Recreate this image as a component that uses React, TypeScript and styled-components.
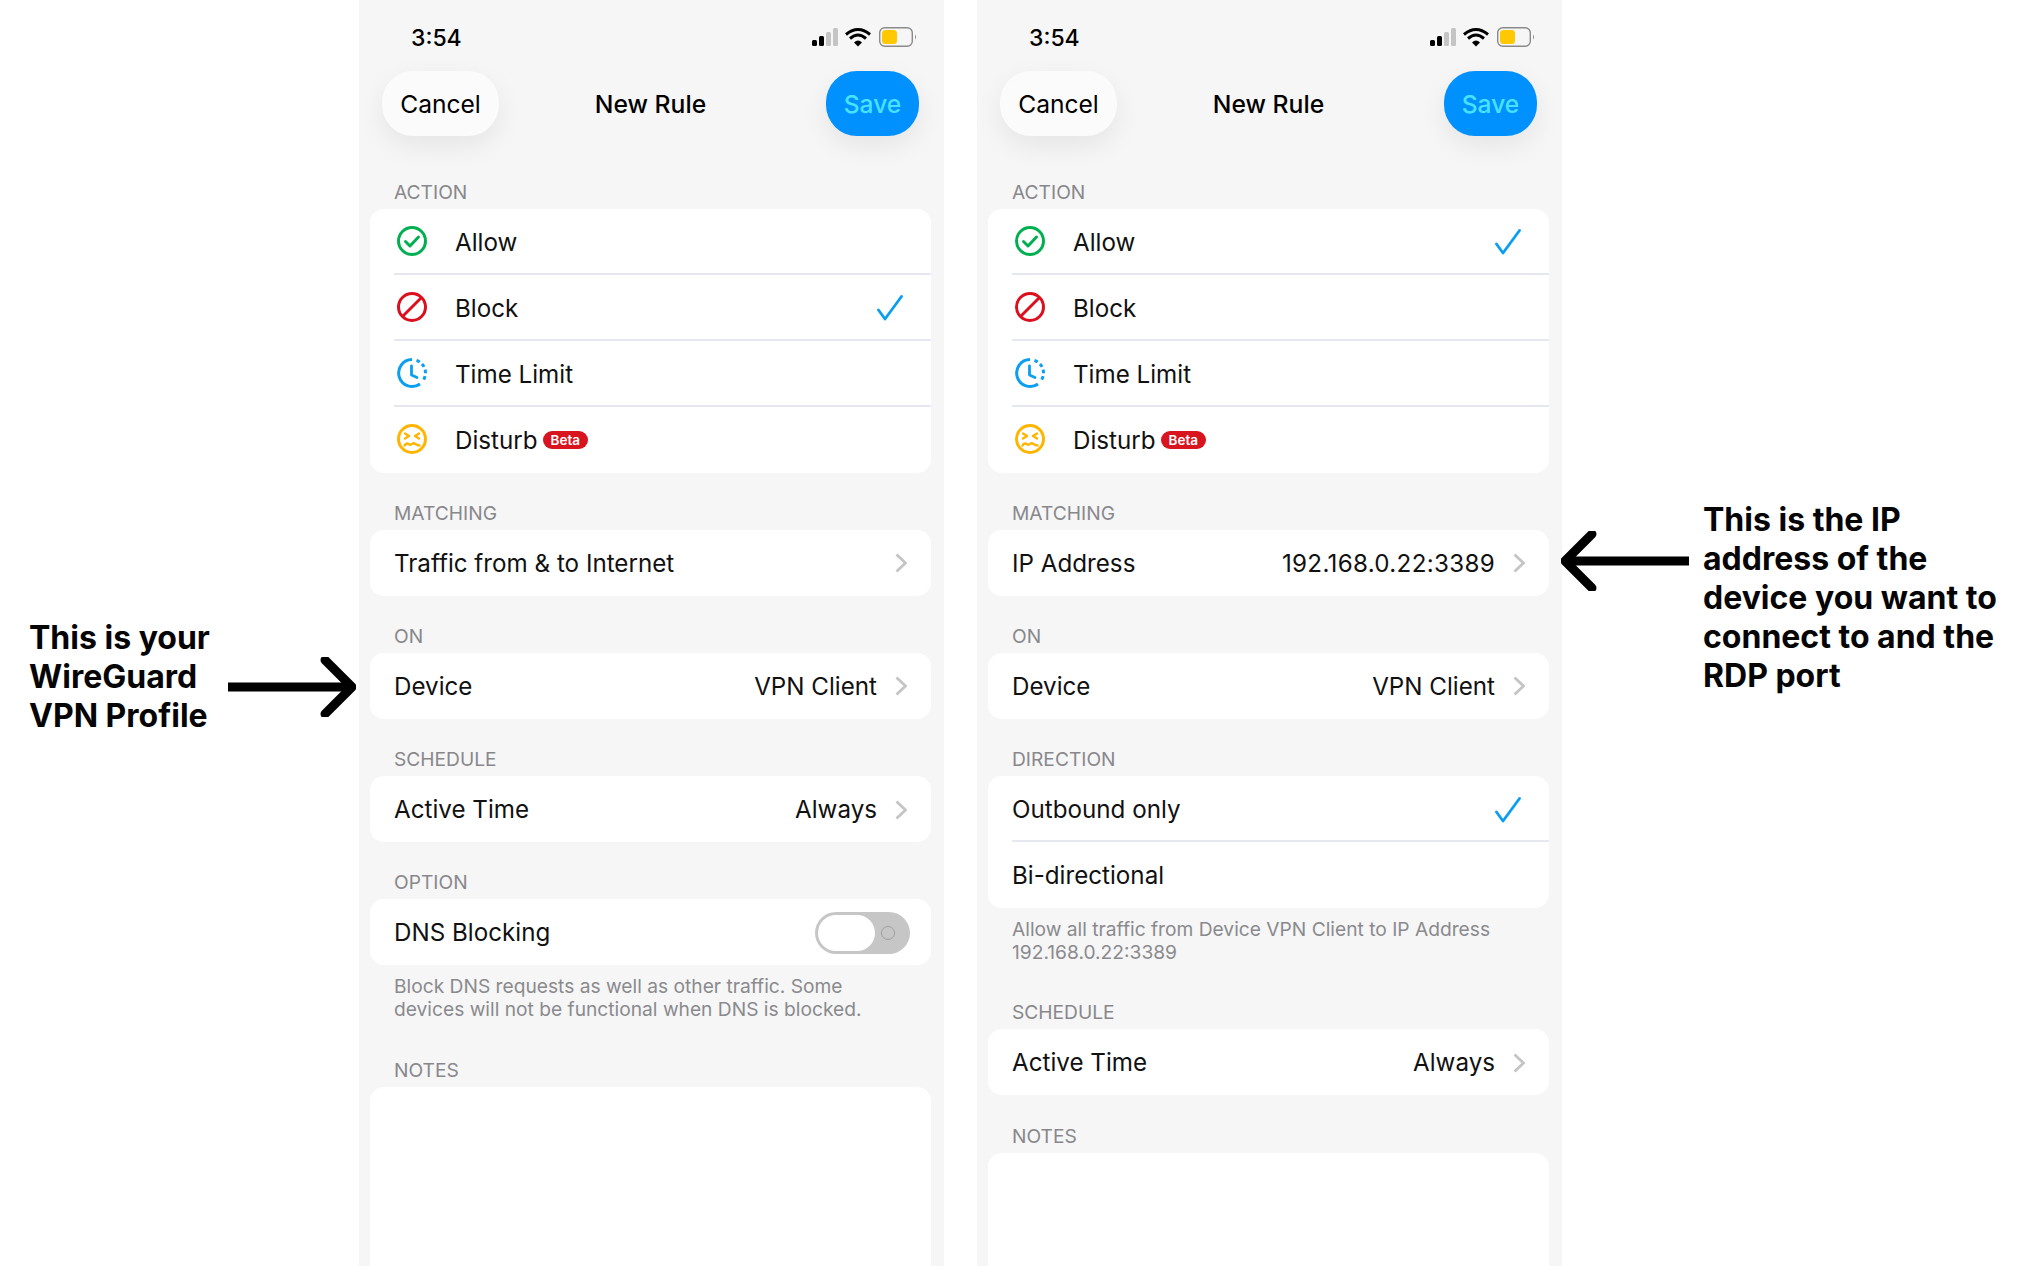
import React from "react";
import styled, { createGlobalStyle } from "styled-components";

const GlobalStyle = createGlobalStyle`
  html, body {
    margin: 0;
    background: #ffffff;
    font-family: Inter, "Noto Sans", sans-serif;
    -webkit-font-smoothing: antialiased;
  }
`;

const Page = styled.div`
  display: flex;
  width: 2032px;
  height: 1266px;
  overflow: hidden;
  background: #ffffff;
`;

const LeftSide = styled.div`
  display: flex;
  align-items: flex-start;
  box-sizing: border-box;
  width: 359px;
  padding: 618px 0 0 29px;
`;

const RightSide = styled.div`
  display: flex;
  align-items: flex-start;
  flex: 1;
  padding-top: 500px;
  margin-left: -1px;
  position: relative;
  z-index: 1;
`;

const Note = styled.div`
  font-size: 32px;
  line-height: 39px;
  font-weight: 700;
  color: #050505;
  white-space: pre-line;
`;

const LeftArrow = styled.svg`
  flex: none;
  margin: 39px 0 0 18px;
`;

const RightArrow = styled.svg`
  flex: none;
  margin: 31px 14px 0 0;
`;

const Phone = styled.div<{ $gap?: boolean }>`
  flex: none;
  box-sizing: border-box;
  width: 585px;
  height: 1266px;
  overflow: hidden;
  padding: 0 13px 0 11px;
  margin-right: ${(p) => (p.$gap ? "33px" : "0")};
  background: #f6f6f6;
`;

const StatusBar = styled.div`
  display: flex;
  align-items: center;
  justify-content: space-between;
  box-sizing: border-box;
  height: 71px;
  padding: 0 13px 0 41px;
`;

const Clock = styled.div`
  font-size: 23px;
  font-weight: 500;
  color: #000;
  margin-bottom: -4px;
`;

const StatusIcons = styled.div`
  display: flex;
  margin-bottom: -4px;
`;

const NavBar = styled.div`
  position: relative;
  display: flex;
  align-items: center;
  justify-content: space-between;
  height: 65px;
  padding: 0 12px;
`;

const NavTitle = styled.div`
  position: absolute;
  left: 0;
  right: 0;
  text-align: center;
  font-size: 24.7px;
  font-weight: 500;
  color: #000;
`;

const NavButton = styled.div<{ $primary?: boolean }>`
  display: flex;
  align-items: center;
  justify-content: center;
  height: 65px;
  width: ${(p) => (p.$primary ? "93px" : "117px")};
  border-radius: 31px;
  font-size: 24.6px;
  font-weight: ${(p) => (p.$primary ? 500 : 400)};
  color: ${(p) => (p.$primary ? "#47e2ff" : "#000")};
  background: ${(p) => (p.$primary ? "#0091ff" : "#fbfbfb")};
  box-shadow: 0 10px 28px rgba(0, 0, 0, 0.07);
`;

const Section = styled.div`
  margin-top: 29.2px;
`;

const FirstGroup = styled.div`
  padding-top: 15.4px;
`;

const SectionLabel = styled.div`
  height: 22px;
  line-height: 22px;
  margin: 0 0 6px 24px;
  font-size: 19.2px;
  color: #88888c;
`;

const Card = styled.div<{ $fill?: boolean }>`
  background: #fff;
  border-radius: 14px;
  ${(p) => (p.$fill ? "height: 400px;" : "")}
`;

const Row = styled.div`
  padding-left: 24px;
  &:not(:last-child) > div {
    box-shadow: inset 0 -2px 0 #e5e8f1;
  }
`;

const RowBody = styled.div<{ $right?: number }>`
  display: flex;
  align-items: center;
  box-sizing: border-box;
  height: 66px;
  padding-top: 1px;
  padding-right: ${(p) => p.$right ?? 24}px;
  font-size: 24.2px;
  color: #111;
`;

const IconSlot = styled.div`
  flex: none;
  display: flex;
  align-items: center;
  box-sizing: border-box;
  width: 61px;
  margin-top: -2px;
  padding-left: 2px;
`;

const Label = styled.div`
  flex: 1;
  display: flex;
  align-items: center;
`;

const Value = styled.div<{ $spaced?: boolean }>`
  margin-right: 18px;
  letter-spacing: ${(p) => (p.$spaced ? "0.3px" : "0")};
`;

const Badge = styled.span`
  margin-left: 5px;
  padding: 0 8px;
  height: 18px;
  line-height: 18px;
  border-radius: 9px;
  background: #d8141e;
  color: #fff;
  font-size: 13.5px;
  font-weight: 600;
`;

const Footnote = styled.div`
  margin: 10px 24px 0;
  padding-bottom: 8px;
  font-size: 19.2px;
  line-height: 23px;
  color: #8a8a8e;
  white-space: pre-line;
`;

const Toggle = styled.div`
  position: relative;
  box-sizing: border-box;
  width: 95px;
  height: 42px;
  border-radius: 21px;
  background: #c6c6c6;
`;

const Thumb = styled.div`
  position: absolute;
  left: 3px;
  top: 3px;
  width: 57px;
  height: 36px;
  border-radius: 18px;
  background: #fff;
`;

const ToggleDot = styled.div`
  position: absolute;
  right: 15px;
  top: 14px;
  box-sizing: border-box;
  width: 14px;
  height: 14px;
  border-radius: 50%;
  border: 1.5px solid #a0a0a0;
`;

const Chevron = () => (
  <svg width="12" height="20" viewBox="0 0 12 20" fill="none">
    <path d="M1.5 1.5 L10.5 10 L1.5 18.5" stroke="#c4c4c6" strokeWidth="2.8" />
  </svg>
);

const Check = () => (
  <svg width="26" height="26" viewBox="0 0 26 26" fill="none">
    <path d="M1.5 15 L8 24 L24.5 1.5" stroke="#0a9fee" strokeWidth="2.8" strokeLinecap="round" strokeLinejoin="round" />
  </svg>
);

const AllowIcon = () => (
  <svg width="32" height="32" viewBox="0 0 32 32" fill="none">
    <circle cx="16" cy="16" r="13.5" stroke="#00b050" strokeWidth="3" />
    <path d="M9.5 16.5 L14 21 L22.5 12" stroke="#00b050" strokeWidth="3" strokeLinecap="round" strokeLinejoin="round" />
  </svg>
);

const BlockIcon = () => (
  <svg width="32" height="32" viewBox="0 0 32 32" fill="none">
    <circle cx="16" cy="16" r="13.5" stroke="#dc0f1e" strokeWidth="3" />
    <path d="M7 25 L25 7" stroke="#dc0f1e" strokeWidth="3" />
  </svg>
);

const TimeIcon = () => (
  <svg width="32" height="32" viewBox="0 0 32 32" fill="none">
    <path d="M16 2.5 A13.5 13.5 0 1 0 24 27" stroke="#0a9ff0" strokeWidth="3" />
    <path d="M20.5 3.3 A13.5 13.5 0 0 1 29.5 16 A13.5 13.5 0 0 1 26 25" stroke="#0a9ff0" strokeWidth="3" strokeDasharray="3.6 3" />
    <path d="M15.5 9 V18 L21 20.5" stroke="#0a9ff0" strokeWidth="2.8" strokeLinecap="round" strokeLinejoin="round" />
  </svg>
);

const DisturbIcon = () => (
  <svg width="32" height="32" viewBox="0 0 32 32" fill="none">
    <circle cx="16" cy="16" r="13.5" stroke="#ffb400" strokeWidth="3" />
    <path d="M9 10.5 L13 13 L9 15.5 M23 10.5 L19 13 L23 15.5" stroke="#ffb400" strokeWidth="2.4" strokeLinecap="round" strokeLinejoin="round" />
    <path d="M8.5 22.5 Q10.5 19.5 12.5 21 T16 21 T19.5 21 T23.5 22.5" stroke="#ffb400" strokeWidth="2.4" strokeLinecap="round" />
  </svg>
);

const StatusGlyphs = () => (
  <svg width="106" height="24" viewBox="0 0 106 24" fill="none">
    <rect x="0" y="14" width="5" height="6" rx="1.5" fill="#000" />
    <rect x="7" y="10" width="5" height="10" rx="1.5" fill="#000" />
    <rect x="14" y="6" width="5" height="14" rx="1.5" fill="#c4c4c4" />
    <rect x="21" y="2" width="5" height="18" rx="1.5" fill="#c4c4c4" />
    <path d="M34 8.5 Q46 -1.5 58 8.5" stroke="#000" strokeWidth="3" />
    <path d="M38 12.5 Q46 5.5 54 12.5" stroke="#000" strokeWidth="3" />
    <path d="M42 16.5 Q46 12.5 50 16.5 L46 20.5 Z" fill="#000" />
    <rect x="67.7" y="1.7" width="32.6" height="18.6" rx="5" stroke="#8a8a8a" strokeWidth="1.4" />
    <rect x="70" y="4" width="15" height="14" rx="3.5" fill="#ffc800" />
    <path d="M103 8.5 Q105 11 103 13.5 Z" fill="#8a8a8a" />
  </svg>
);

type Action = { name: string; icon: React.ReactNode; beta?: boolean };

const actions: Action[] = [
  { name: "Allow", icon: <AllowIcon /> },
  { name: "Block", icon: <BlockIcon /> },
  { name: "Time Limit", icon: <TimeIcon /> },
  { name: "Disturb", icon: <DisturbIcon />, beta: true },
];

const Header = () => (
  <>
    <StatusBar>
      <Clock>3:54</Clock>
      <StatusIcons>
        <StatusGlyphs />
      </StatusIcons>
    </StatusBar>
    <NavBar>
      <NavTitle>New Rule</NavTitle>
      <NavButton>Cancel</NavButton>
      <NavButton $primary>Save</NavButton>
    </NavBar>
  </>
);

const ActionSection: React.FC<{ selected: string }> = ({ selected }) => (
  <FirstGroup>
    <Section>
      <SectionLabel>ACTION</SectionLabel>
      <Card>
        {actions.map((a) => (
          <Row key={a.name}>
            <RowBody $right={28}>
              <IconSlot>{a.icon}</IconSlot>
              <Label>
                {a.name}
                {a.beta && <Badge>Beta</Badge>}
              </Label>
              {a.name === selected && <Check />}
            </RowBody>
          </Row>
        ))}
      </Card>
    </Section>
  </FirstGroup>
);

const LinkSection: React.FC<{ title: string; name: string; value?: string }> = ({ title, name, value }) => (
  <Section>
    <SectionLabel>{title}</SectionLabel>
    <Card>
      <Row>
        <RowBody>
          <Label>{name}</Label>
          {value && <Value $spaced={/\d/.test(value)}>{value}</Value>}
          <Chevron />
        </RowBody>
      </Row>
    </Card>
  </Section>
);

const NotesSection = () => (
  <Section>
    <SectionLabel>NOTES</SectionLabel>
    <Card $fill />
  </Section>
);

export default function App() {
  return (
    <Page>
      <GlobalStyle />
      <LeftSide>
        <Note>{"This is your\nWireGuard\nVPN Profile"}</Note>
        <LeftArrow width="128" height="60" viewBox="0 0 128 60" fill="none">
          <path d="M0 30 H124" stroke="#000" strokeWidth="9" />
          <path d="M97 3 L124 30 L97 57" stroke="#000" strokeWidth="9" strokeLinecap="round" strokeLinejoin="round" />
        </LeftArrow>
      </LeftSide>

      <Phone $gap>
        <Header />
        <ActionSection selected="Block" />
        <LinkSection title="MATCHING" name="Traffic from & to Internet" />
        <LinkSection title="ON" name="Device" value="VPN Client" />
        <LinkSection title="SCHEDULE" name="Active Time" value="Always" />
        <Section>
          <SectionLabel>OPTION</SectionLabel>
          <Card>
            <Row>
              <RowBody $right={21}>
                <Label>DNS Blocking</Label>
                <Toggle>
                  <Thumb />
                  <ToggleDot />
                </Toggle>
              </RowBody>
            </Row>
          </Card>
          <Footnote>{"Block DNS requests as well as other traffic. Some\ndevices will not be functional when DNS is blocked."}</Footnote>
        </Section>
        <NotesSection />
      </Phone>

      <Phone>
        <Header />
        <ActionSection selected="Allow" />
        <LinkSection title="MATCHING" name="IP Address" value="192.168.0.22:3389" />
        <LinkSection title="ON" name="Device" value="VPN Client" />
        <Section>
          <SectionLabel>DIRECTION</SectionLabel>
          <Card>
            <Row>
              <RowBody $right={28}>
                <Label>Outbound only</Label>
                <Check />
              </RowBody>
            </Row>
            <Row>
              <RowBody>
                <Label>Bi-directional</Label>
              </RowBody>
            </Row>
          </Card>
          <Footnote>{"Allow all traffic from Device VPN Client to IP Address\n192.168.0.22:3389"}</Footnote>
        </Section>
        <LinkSection title="SCHEDULE" name="Active Time" value="Always" />
        <NotesSection />
      </Phone>

      <RightSide>
        <RightArrow width="128" height="60" viewBox="0 0 128 60" fill="none">
          <path d="M128 30 H4" stroke="#000" strokeWidth="9" />
          <path d="M31 3 L4 30 L31 57" stroke="#000" strokeWidth="9" strokeLinecap="round" strokeLinejoin="round" />
        </RightArrow>
        <Note>{"This is the IP\naddress of the\ndevice you want to\nconnect to and the\nRDP port"}</Note>
      </RightSide>
    </Page>
  );
}
